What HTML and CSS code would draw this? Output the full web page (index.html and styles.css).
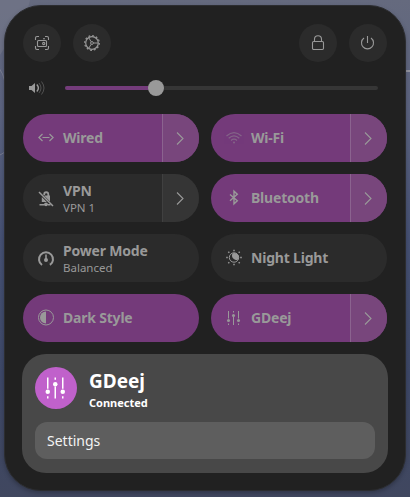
FILE: index.html
```html
<!DOCTYPE html>
<html lang="en">
<head>
<meta charset="utf-8">
<title>Quick Settings</title>
<link rel="stylesheet" href="styles.css">
</head>
<body>
<svg class="defs" width="0" height="0">
  <symbol id="chevron" viewBox="0 0 16 16"><path d="M5 2.500 11 8.500 5 14.500" fill="none" stroke="currentColor" stroke-width="1.1"/></symbol>
  <symbol id="sliders" viewBox="0 0 16 16">
    <path d="M2.500 1v7.500M2.500 13.500v1.500M7.500 1v1.500M7.500 7v8M12.500 1v7.500M12.500 13.500v1.500" fill="none" stroke="currentColor"/>
    <circle cx="2.500" cy="10.500" r="1.500" fill="currentColor"/><circle cx="7.500" cy="5.500" r="1.500" fill="currentColor"/><circle cx="12.500" cy="10.500" r="1.500" fill="currentColor"/>
  </symbol>
</svg>
<svg class="wallpaper" viewBox="0 0 410 497" fill="none" stroke="#8d8e9c">
  <path d="M0 0h30q-2 6-2 12L0 55z" fill="#75788a" stroke="none" opacity=".6"/>
  <path d="M-1 68q4 5 6 14M0 155l5-3" opacity=".6"/>
  <path d="M404 71h6" stroke="#a5a4ab" stroke-width="1.500"/>
</svg>
<main class="panel">
  <header class="toolbar">
    <button class="round"><svg class="icon" viewBox="0 0 16 16" fill="none" stroke="currentColor" stroke-width="1.1"><path d="M1.500 5V3q0-1.500 1.500-1.500h2M11 1.500h2q1.500 0 1.500 1.500v2M1.500 11v2q0 1.500 1.500 1.500h2M11 14.500h2q1.500 0 1.500-1.500v-2M9 3.700h2"/><rect x="3.500" y="5.500" width="9" height="6" rx="1"/><circle cx="9.700" cy="8.500" r="1.100"/></svg></button>
    <button class="round"><svg class="icon" viewBox="0 0 16 16" fill="none" stroke="currentColor"><circle cx="8" cy="8" r="6.300" stroke-width="1.200"/><circle cx="8" cy="8" r="7.300" stroke-width="1.200" stroke-dasharray="1.800 2.020"/><circle cx="8" cy="8" r="1.400"/><path d="M9.400 8h4.800M7.200 6.800 4.800 2.800M7.200 9.200l-2.400 4"/></svg></button>
    <span class="spacer"></span>
    <button class="round"><svg class="icon" viewBox="0 0 16 16" fill="none" stroke="currentColor" stroke-width="1.100"><rect x="2.500" y="6.500" width="11" height="8" rx="1.200"/><path d="M4.500 6.500V4.200a3.500 3.500 0 0 1 7 0v2.300"/></svg></button>
    <button class="round"><svg class="icon" viewBox="0 0 16 16" fill="none" stroke="currentColor" stroke-width="1.100"><path d="M7.500 1v7M4 3a6 6 0 1 0 7 0"/></svg></button>
  </header>

  <div class="volume">
    <svg class="icon" viewBox="0 0 16 16" fill="none" stroke="currentColor"><path d="M0 6h2.500L6 3v10L2.500 10H0z" fill="currentColor" stroke="none"/><path d="M7.800 4.500q3.200 3.500 0 7" stroke-width="1.400"/><path d="M10 3q4 5 0 10M12.500 1.500q5 6.500 0 13" opacity=".4"/></svg>
    <div class="track"><div class="fill"></div><div class="thumb"></div></div>
  </div>

  <section class="tiles">
    <div class="tile on">
      <div class="main"><svg class="icon" viewBox="0 0 16 16" fill="none" stroke="currentColor" stroke-width="1.200"><path d="M4.500 4 .9 7.500l3.600 3.500M11.500 4l3.600 3.500-3.600 3.500M4.500 7.500h7"/></svg><b>Wired</b></div>
      <div class="arrow"><svg class="icon"><use href="#chevron"/></svg></div>
    </div>
    <div class="tile on">
      <div class="main"><svg class="icon faint" viewBox="0 0 16 16" fill="none" stroke="currentColor" stroke-width="1.200"><path d="M.5 6q7.500-6.800 15 0M2.700 8.300q5.300-4.700 10.600 0M5 10.500q3-2.600 6 0"/><circle cx="8" cy="12.500" r="1" fill="currentColor" stroke="none"/></svg><b>Wi-Fi</b></div>
      <div class="arrow"><svg class="icon"><use href="#chevron"/></svg></div>
    </div>
    <div class="tile">
      <div class="main"><svg class="icon low" viewBox="0 0 16 16" fill="none" stroke="currentColor"><path d="M6.200 4V3.300a2 2 0 0 1 4.100 0V6" stroke-width="1.800"/><path d="M6 4.500h6v6zM3.800 6v5h5z" fill="currentColor" stroke="none"/><path d="M1.500 13.800h5M10 13.800h2.500" stroke-width="1.600"/><circle cx="8" cy="13.300" r="1.900" fill="currentColor" stroke="none"/><path d="m1 1 14 14" stroke-width="1.500"/></svg><div class="label"><b>VPN</b><small>VPN 1</small></div></div>
      <div class="arrow"><svg class="icon"><use href="#chevron"/></svg></div>
    </div>
    <div class="tile on">
      <div class="main"><svg class="icon" viewBox="0 0 16 16" fill="none" stroke="currentColor" stroke-width="1.400"><path d="m4 4.500 7.300 6.300-3.300 3V1.200l3.300 3L4 10.700"/></svg><b>Bluetooth</b></div>
      <div class="arrow"><svg class="icon"><use href="#chevron"/></svg></div>
    </div>
    <div class="tile">
      <div class="main"><svg class="icon low" viewBox="0 0 16 16" fill="none" stroke="currentColor"><path d="M4 14a7 7 0 1 1 8 0" stroke-width="2"/><path d="M8 3.500v5" stroke-width="1.600"/><circle cx="8" cy="9" r="2" fill="currentColor" stroke="none"/><path d="m11 11.500 1.500 1.500" opacity=".4"/></svg><div class="label"><b>Power Mode</b><small>Balanced</small></div></div>
    </div>
    <div class="tile">
      <div class="main"><svg class="icon" viewBox="0 0 16 16" fill="none" stroke="currentColor"><circle cx="8" cy="7.500" r="4.700"/><path d="M8.500 3a4.500 4.500 0 0 1 4 6.500q-1.500.8-3.300.2Q6 8.500 6 5.500q0-1.300.8-2.300z" fill="currentColor" stroke="none"/><path d="M8-.3v1.600M8 13.700v1.600M.2 7.500h1.600M14.200 7.500h1.600M2.300 1.800l1 1M12.700 12.200l1 1M2.300 13.200l1-1M12.700 2.800l1-1" stroke-width="1.500"/></svg><b>Night Light</b></div>
    </div>
    <div class="tile on">
      <div class="main"><svg class="icon" viewBox="0 0 16 16"><circle cx="8" cy="7.500" r="7.500" fill="none" stroke="currentColor"/><path d="M8 1.500a6 6 0 0 0 0 12z" fill="currentColor"/></svg><b>Dark Style</b></div>
    </div>
    <div class="tile on">
      <div class="main"><svg class="icon"><use href="#sliders"/></svg><b>GDeej</b></div>
      <div class="arrow"><svg class="icon"><use href="#chevron"/></svg></div>
    </div>
  </section>

  <section class="card">
    <div class="card-head">
      <div class="badge"><svg><use href="#sliders"/></svg></div>
      <div><h1>GDeej</h1><p>Connected</p></div>
    </div>
    <button class="settings">Settings</button>
  </section>
</main>
</body>
</html>
```
FILE: styles.css
```css
* { box-sizing: border-box; }
body {
  margin: 0;
  height: 497px;
  padding: 5px 4px 6px;
  overflow: hidden;
  background: linear-gradient(180deg, #656a7e 0, #5c6480 22%, #465174 48%, #3d4868 75%, #40475f 100%);
  font-family: "Noto Sans", sans-serif;
  color: #999;
}
.defs { display: block; height: 0; }
.wallpaper { position: absolute; left: 0; top: 0; width: 410px; height: 497px; }
button { border: 0; padding: 0; font: inherit; color: inherit; }
svg { display: block; overflow: visible; }
.panel {
  position: relative;
  width: 402px;
  height: 486px;
  padding: 18px;
  border: 1px solid #2c2d30;
  border-radius: 37px;
  background: #212121;
  box-shadow: 0 2px 4px rgba(0, 0, 0, .25);
}
.icon { width: 16px; height: 16px; flex: none; }
.faint { opacity: .45; }
.toolbar { display: flex; gap: 12px; width: 364px; }
.spacer { flex: 1; }
.round {
  display: grid;
  place-items: center;
  width: 38px;
  height: 38px;
  border-radius: 50%;
  background: #2b2b2b;
}
.volume { display: flex; align-items: center; gap: 20px; height: 16px; margin: 18px 0 18px 6px; }
.track { position: relative; width: 313px; height: 4px; border-radius: 2px; background: #363636; }
.fill { width: 90px; height: 4px; border-radius: 2px; background: #743c7b; }
.thumb { position: absolute; left: 82.500px; top: -6px; width: 16px; height: 16px; border-radius: 50%; background: #999; }
.tiles { display: grid; grid-template-columns: 176px 176px; gap: 12px; grid-auto-rows: 48px; }
.tile { display: flex; border-radius: 24px; overflow: hidden; background: #2b2b2b; }
.main { flex: 1; display: flex; align-items: center; gap: 9px; padding-left: 15px; }
.main > .icon { margin-top: -1px; }
.main > .low { margin-top: 1px; }
.main > b { margin-top: -1px; }
.arrow {
  width: 37px;
  display: flex;
  align-items: center;
  padding-left: 9px;
  border-left: 1px solid #404040;
  background: #353535;
}
.on { background: #743a7a; }
.on .arrow { background: #78467c; border-color: #8b638f; }
b {
  display: block;
  font-size: 14px;
  line-height: 19px;
  font-weight: 700;
  letter-spacing: -.2px;
  white-space: nowrap;
}
small { display: block; font-size: 11.500px; line-height: 16px; }
.card {
  width: 366px;
  height: 119px;
  margin: 12px 0 0 -1px;
  padding: 13px;
  border-radius: 24px;
  background: #484848;
  color: #fff;
}
.card-head { display: flex; gap: 12px; height: 42px; }
.badge { display: grid; place-items: center; width: 42px; height: 42px; border-radius: 50%; background: #c061cb; }
.badge svg { width: 24px; height: 24px; }
h1 { margin: 1px 0 0; font-size: 19px; line-height: 26px; font-weight: 700; }
p { margin: 1px 0 0; font-size: 11px; line-height: 16px; font-weight: 700; }
.settings {
  display: block;
  width: 340px;
  height: 37px;
  margin-top: 13px;
  padding: 0 0 1px 12px;
  border-radius: 12px;
  background: #5e5e5e;
  color: #f3f3f3;
  text-align: left;
  font-size: 14px;
}
```
